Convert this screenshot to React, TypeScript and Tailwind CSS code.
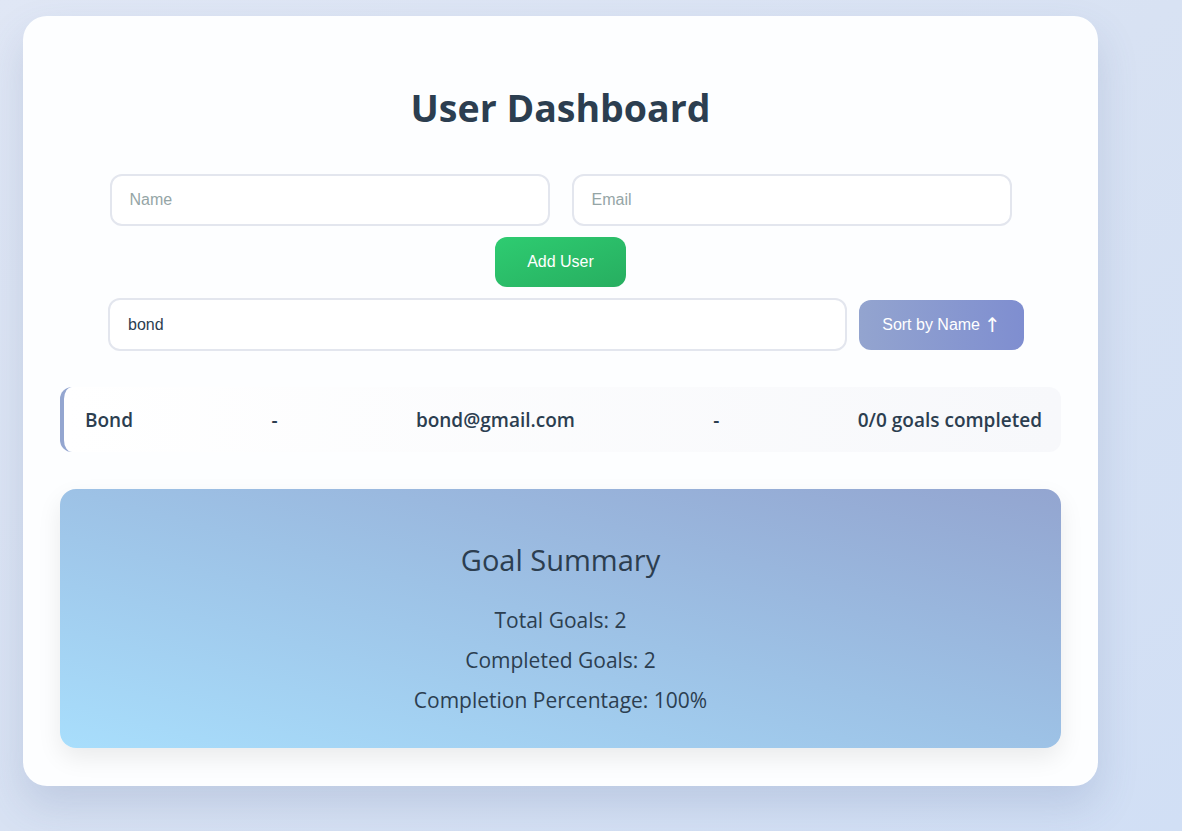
import React from "react";

export default function App() {
  const seg = { fontFamily: '"Open Sans", "Noto Sans", sans-serif' };
  const arial = { fontFamily: '"Liberation Sans", Arial, sans-serif' };
  return (
    <div className="min-h-screen w-full bg-gradient-to-br from-[#e0e7f5] via-[#d8e2f3] to-[#d1dff5] pt-[16px] pl-[23px]" style={seg}>
      <div className="w-[1075px] h-[770px] rounded-[24px] bg-[#fdfeff] shadow-[0_20px_40px_rgba(80,100,150,0.18)] px-[37px] pt-[64px]">
        <h1 className="text-center text-[37.5px] leading-[56px] font-bold text-[#2c3e50]">User Dashboard</h1>

        <div className="mt-[38px] flex justify-center gap-[22px]" style={arial}>
          <input
            placeholder="Name"
            className="w-[440px] h-[52px] rounded-[12px] border-2 border-[#e3e6ee] bg-white px-[18px] text-[16px] text-[#2c3e50] placeholder:text-[#95a5a6] outline-none"
          />
          <input
            placeholder="Email"
            className="w-[440px] h-[52px] rounded-[12px] border-2 border-[#e3e6ee] bg-white px-[18px] text-[16px] text-[#2c3e50] placeholder:text-[#95a5a6] outline-none"
          />
        </div>

        <div className="mt-[11px] flex justify-center" style={arial}>
          <button className="w-[131px] h-[50px] rounded-[12px] bg-gradient-to-br from-[#2ecc71] to-[#27ae60] text-white text-[16px]">
            Add User
          </button>
        </div>

        <div className="mt-[11px] flex items-center gap-[12px] pl-[48px]" style={arial}>
          <input
            defaultValue="bond"
            className="w-[739px] h-[53px] rounded-[12px] border-2 border-[#e3e6ee] bg-white px-[18px] text-[16px] text-[#2c3e50] outline-none"
          />
          <button className="w-[165px] h-[50px] rounded-[12px] bg-gradient-to-r from-[#93a4cf] to-[#7f8ed0] text-white text-[16px] flex items-center justify-center gap-[4px]">
            <span>Sort by Name</span>
            <span className="text-[20px] leading-none" style={{ fontFamily: '"DejaVu Sans", sans-serif' }}>↑</span>
          </button>
        </div>

        <div className="mt-[36px] h-[65px] flex items-center justify-between rounded-[12px] border-l-4 border-[#94a6d0] bg-gradient-to-r from-white to-[#f7f8fb] pl-[21px] pr-[19px] pt-[2px] text-[19px] font-semibold text-[#2c3e50]">
          <span>Bond</span>
          <span>-</span>
          <span>bond@gmail.com</span>
          <span>-</span>
          <span>0/0 goals completed</span>
        </div>

        <div className="mt-[37px] h-[259px] rounded-[16px] bg-gradient-to-tr from-[#a8defc] via-[#9dc2e6] to-[#93a5d0] shadow-[0_10px_25px_rgba(0,0,0,0.08)] flex flex-col items-center pt-[51px] text-[#2c3e50]">
          <h2 className="text-[29px] leading-[40px] font-medium">Goal Summary</h2>
          <p className="mt-[20px] text-[21px] leading-[40px]">Total Goals: 2</p>
          <p className="text-[21px] leading-[40px]">Completed Goals: 2</p>
          <p className="text-[21px] leading-[40px]">Completion Percentage: 100%</p>
        </div>
      </div>
    </div>
  );
}
